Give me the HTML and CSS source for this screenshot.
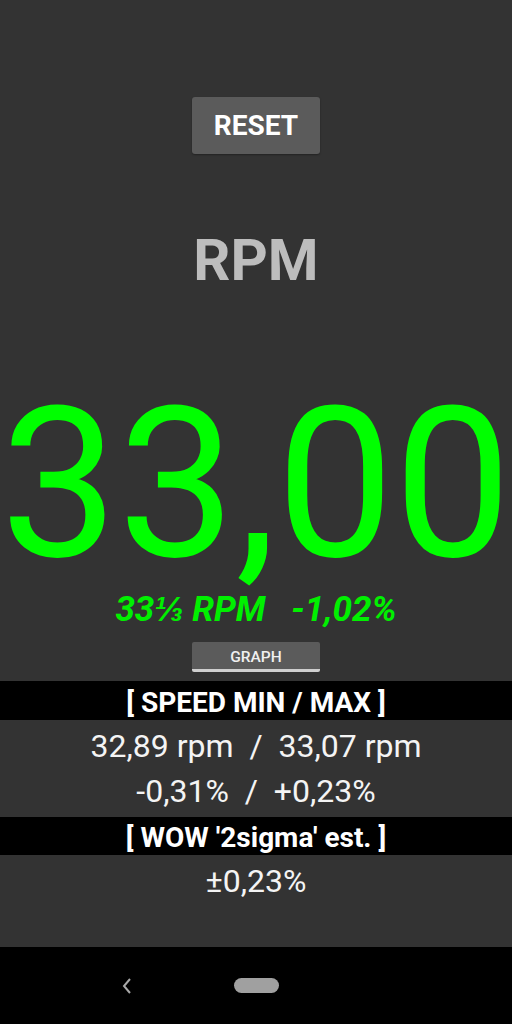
FILE: index.html
```html
<!DOCTYPE html>
<html>
<head>
<meta charset="utf-8">
<link rel="stylesheet" href="styles.css">
</head>
<body>
<div class="screen">
  <main class="app">
    <div class="reset-wrap"><button class="btn-reset">RESET</button></div>
    <div class="unit">RPM</div>
    <div class="speed">33,00</div>
    <div class="target">33⅓ RPM&nbsp;&nbsp; -1,02%</div>
    <div class="graph-wrap"><button class="btn-graph">GRAPH</button></div>
    <div class="section-head first">[ SPEED MIN / MAX ]</div>
    <div class="values">
      <div class="val-line">32,89 rpm&nbsp; / &nbsp;33,07 rpm</div>
      <div class="val-line">-0,31%&nbsp; / &nbsp;+0,23%</div>
    </div>
    <div class="section-head">[ WOW '2sigma' est. ]</div>
    <div class="values">
      <div class="val-line">±0,23%</div>
    </div>
  </main>
  <nav class="navbar">
    <svg class="nav-back" width="12" height="18" viewBox="0 0 12 18"><path d="M9 2 L3 9 L9 16" fill="none" stroke="#a8a8a8" stroke-width="2"/></svg>
    <span class="nav-home"></span>
    <span class="nav-spacer"></span>
  </nav>
</div>
</body>
</html>
```
FILE: styles.css
```css
html, body {
  margin: 0;
  padding: 0;
}
body {
  background: #333333;
  font-family: Roboto, "Liberation Sans", sans-serif;
  color: #ffffff;
}
.screen {
  width: 512px;
  height: 1024px;
  display: flex;
  flex-direction: column;
}
.app {
  flex: 1;
  display: flex;
  flex-direction: column;
  background: #333333;
}
.reset-wrap {
  display: flex;
  justify-content: center;
  padding-top: 97px;
}
.btn-reset {
  width: 128px;
  height: 57px;
  border: none;
  border-radius: 3px;
  background: #5b5b5b;
  color: #ffffff;
  font-family: Roboto, "Liberation Sans", sans-serif;
  font-weight: 700;
  font-size: 28px;
  padding: 0;
  box-shadow: 0 1px 2px rgba(0,0,0,0.35);
}
.unit {
  margin-top: 77px;
  text-align: center;
  font-size: 58px;
  line-height: 58px;
  font-weight: 700;
  color: #bdbdbd;
}
.speed {
  margin-top: 96px;
  text-align: center;
  font-size: 209px;
  line-height: 200px;
  color: #00ff00;
}
.target {
  margin-top: 5px;
  text-align: center;
  font-size: 35px;
  line-height: 40px;
  font-weight: 700;
  font-style: italic;
  color: #00f000;
}
.graph-wrap {
  display: flex;
  justify-content: center;
  margin-top: 12px;
}
.btn-graph {
  width: 128px;
  height: 30px;
  border: none;
  border-radius: 2px;
  background: #5b5b5b;
  border-bottom: 3px solid #cfcfcf;
  color: #f0f0f0;
  font-family: Roboto, "Liberation Sans", sans-serif;
  font-weight: 500;
  font-size: 15.5px;
  padding: 3px 0 0 0;
}
.section-head {
  background: #000000;
  text-align: center;
  font-size: 28px;
  font-weight: 700;
  padding-top: 4px;
  height: 34px;
  line-height: 34px;
  color: #ffffff;
}
.section-head.first {
  margin-top: 9px;
  height: 35px;
  line-height: 35px;
}
.values {
  padding: 4px 0 3px;
}
.val-line {
  text-align: center;
  font-size: 32px;
  line-height: 45px;
  color: #f4f4f4;
}
.navbar {
  height: 77px;
  background: #000000;
  display: flex;
  align-items: center;
  justify-content: center;
}
.nav-back {
  margin-right: 101px;
}
.nav-home {
  width: 45px;
  height: 15px;
  border-radius: 8px;
  background: #a0a0a0;
}
.nav-spacer {
  width: 113px;
}
```
